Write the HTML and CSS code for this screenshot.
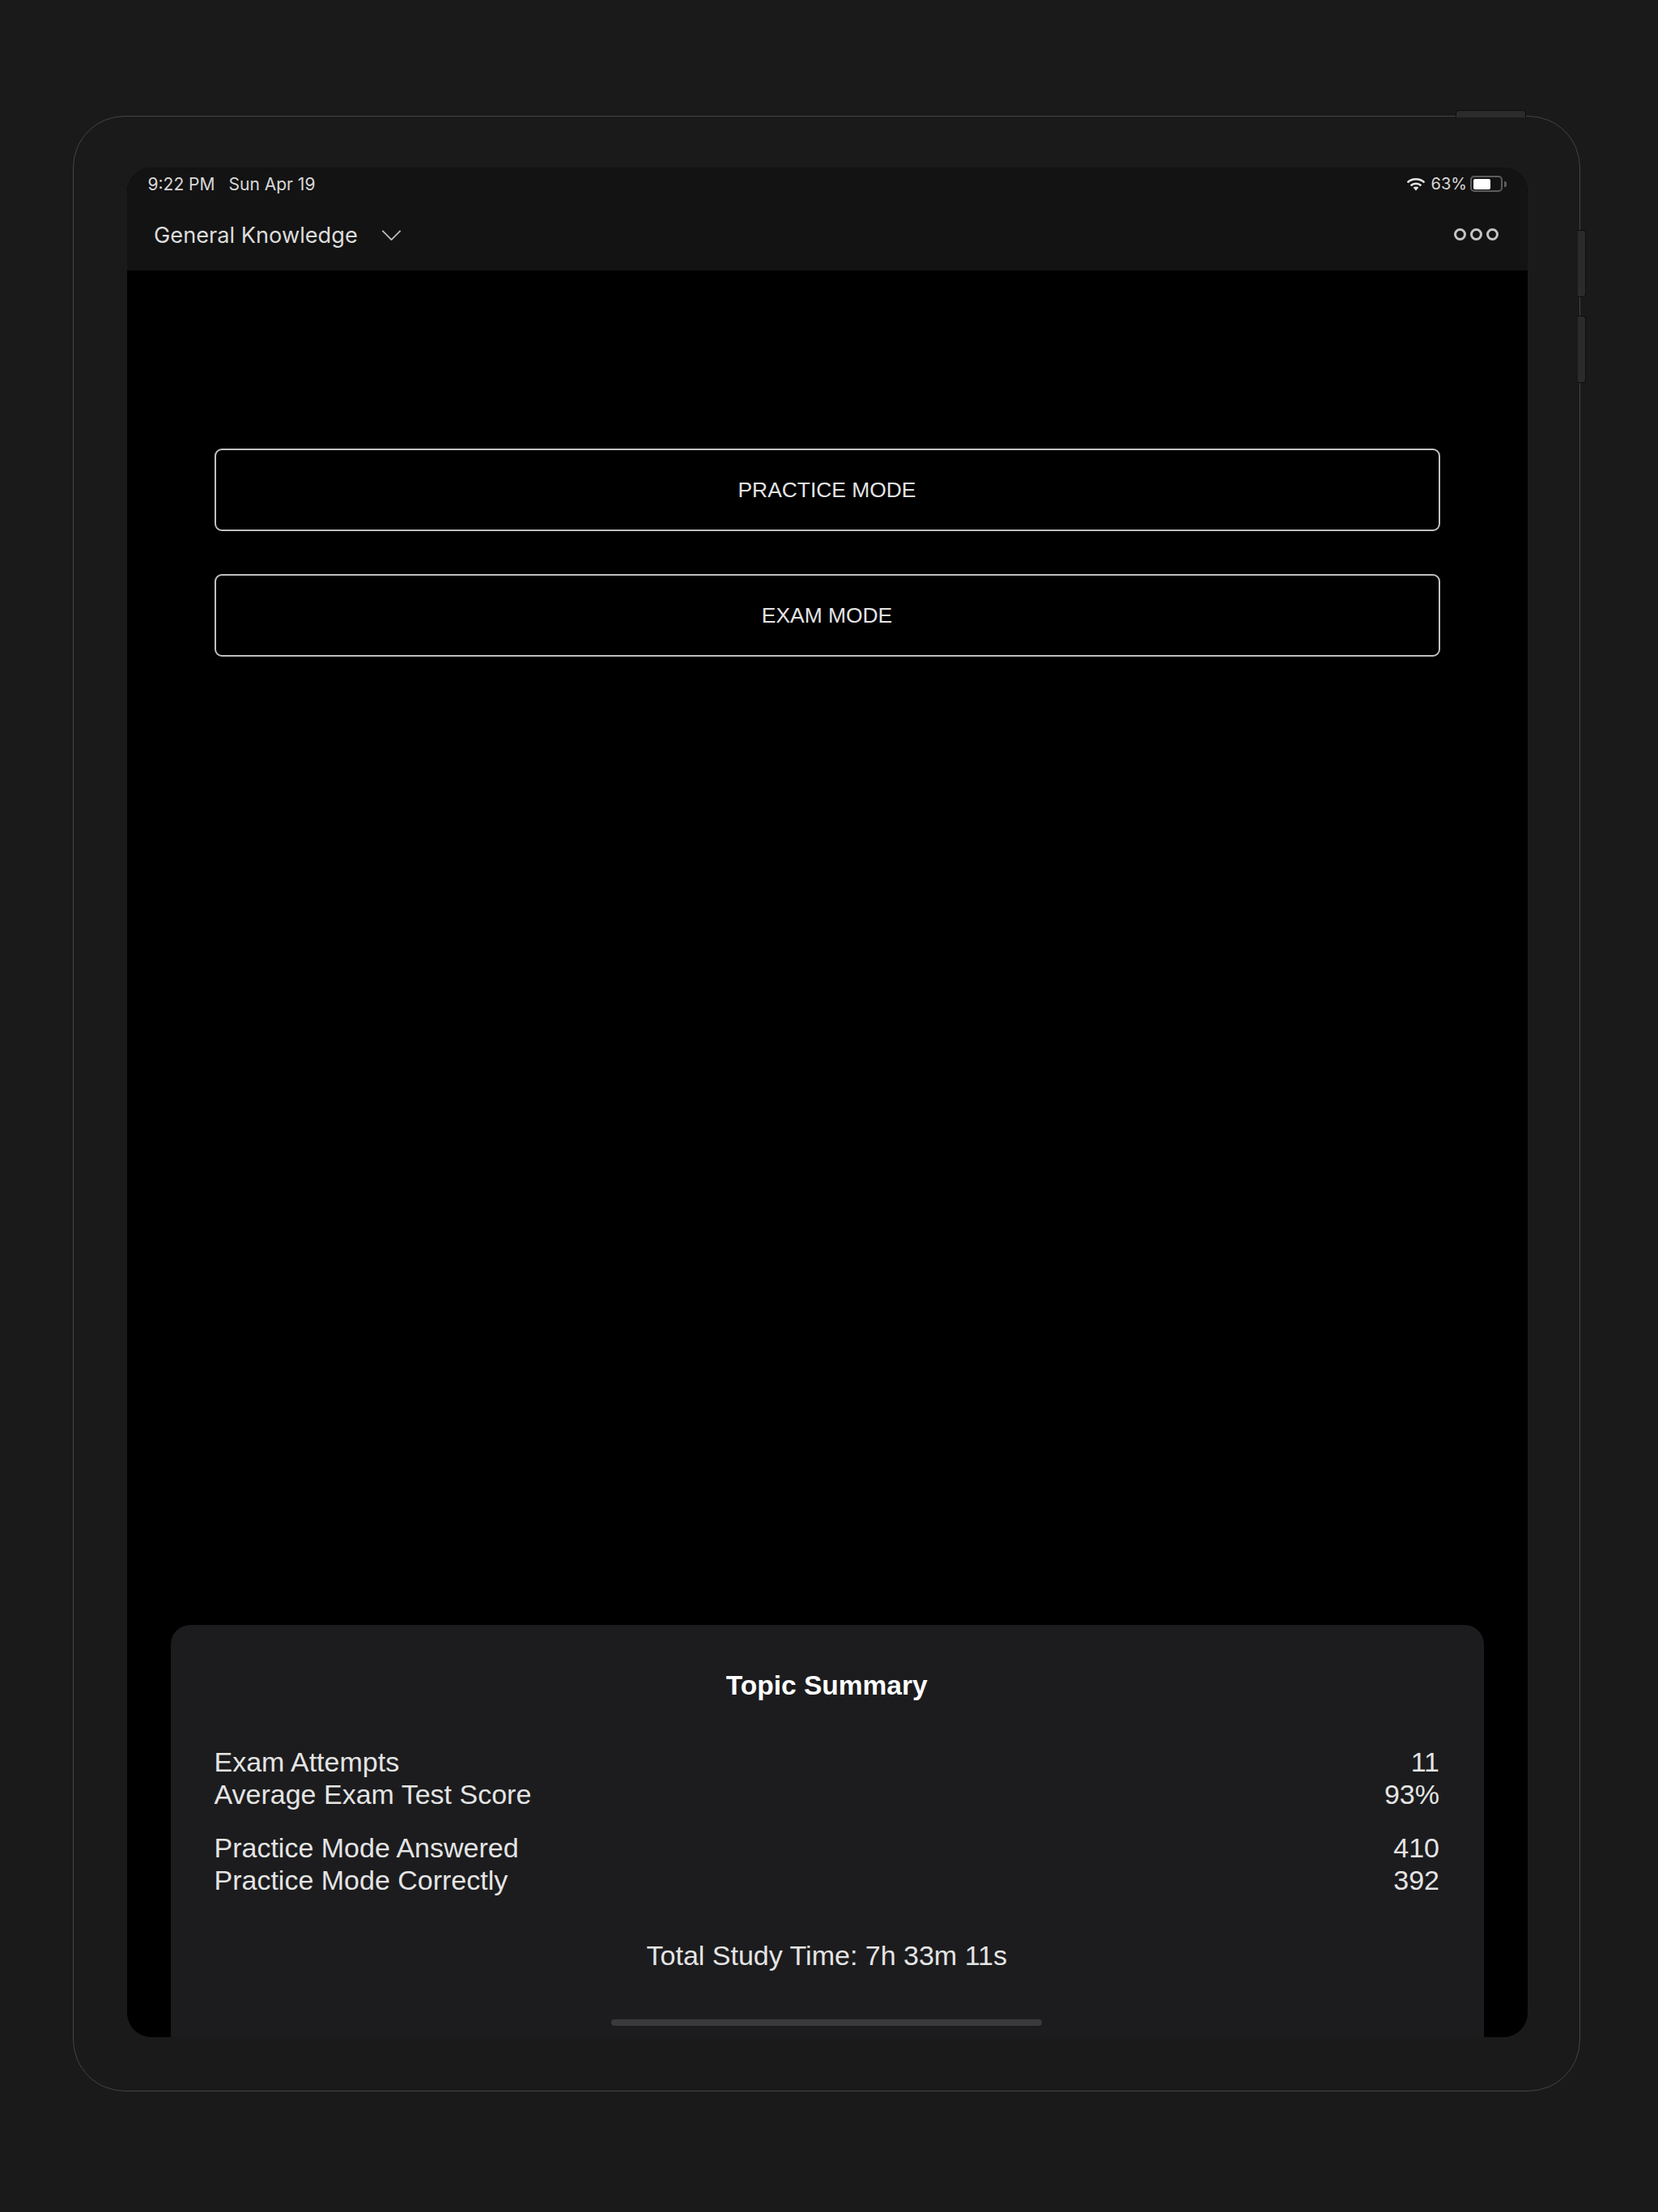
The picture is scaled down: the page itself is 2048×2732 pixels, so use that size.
FILE: index.html
```html
<!DOCTYPE html>
<html lang="en">

<head>
  <meta charset="UTF-8" />
  <title>General Knowledge</title>
  <link rel="stylesheet" href="styles.css">
</head>

<body>
  <div class="device">
    <div class="hw hw-top"></div>
    <div class="hw hw-vol-up"></div>
    <div class="hw hw-vol-down"></div>

    <div class="screen">
      <header class="topbar">
        <div class="status">
          <div class="status-left">
            <span>9:22 PM</span>
            <span>Sun Apr 19</span>
          </div>
          <div class="status-right">
            <svg class="wifi" viewBox="0 0 24 17" aria-hidden="true">
              <path d="M1.6 6.4C7.4 .9 16.6 .9 22.4 6.4" />
              <path d="M5.6 10.2C9.2 6.9 14.8 6.9 18.4 10.2" />
              <path class="wifi-dot" d="M8.6 12.6C10.6 11 13.4 11 15.4 12.6L12 16.6Z" />
            </svg>
            <span class="pct">63%</span>
            <div class="battery">
              <div class="battery-level"></div>
            </div>
            <div class="battery-nub"></div>
          </div>
        </div>
        <div class="nav">
          <div class="topic">
            <span>General Knowledge</span>
            <svg class="chevron" viewBox="0 0 26 14" aria-hidden="true">
              <path d="M1 1L13 13L25 1" />
            </svg>
          </div>
          <div class="more">
            <i></i><i></i><i></i>
          </div>
        </div>
      </header>

      <main class="content">
        <div class="modes">
          <button class="mode-btn">PRACTICE MODE</button>
          <button class="mode-btn">EXAM MODE</button>
        </div>

        <section class="summary">
          <h2>Topic Summary</h2>
          <div class="group">
            <div class="row"><span>Exam Attempts</span><span>11</span></div>
            <div class="row"><span>Average Exam Test Score</span><span>93%</span></div>
          </div>
          <div class="group">
            <div class="row"><span>Practice Mode Answered</span><span>410</span></div>
            <div class="row"><span>Practice Mode Correctly</span><span>392</span></div>
          </div>
          <p class="total">Total Study Time: 7h 33m 11s</p>
        </section>
      </main>

      <div class="home-bar"></div>
    </div>
  </div>
</body>

</html>
```

FILE: styles.css
```css
* {
  margin: 0;
  padding: 0;
  box-sizing: border-box;
}

body {
  background-color: #1a1a1a;
  font-family: "Liberation Sans", Arial, sans-serif;
  color: #e4e4e4;
  height: 2732px;
  overflow: hidden;
}

.device {
  position: relative;
  width: 1862px;
  height: 2440px;
  margin: 143px 0 0 90px;
  padding: 63px 64px 66px 65.5px;
  border: 1px solid #444;
  border-radius: 64px;
}

.hw {
  position: absolute;
  background-color: #2b2b2b;
  border: 1px solid #0e0e0e;
}

.hw-top {
  top: -8px;
  left: 1707px;
  width: 87px;
  height: 9px;
  border-bottom: 0;
  border-radius: 4px 4px 0 0;
}

.hw-vol-up,
.hw-vol-down {
  left: 1858px;
  width: 10px;
  border-left: 0;
  border-radius: 0 4px 4px 0;
}

.hw-vol-up {
  top: 140px;
  height: 83px;
}

.hw-vol-down {
  top: 246px;
  height: 83px;
}

.screen {
  position: relative;
  display: flex;
  flex-direction: column;
  height: 100%;
  background-color: #000;
  border-radius: 30px;
  overflow: hidden;
}

.topbar {
  height: 127px;
  padding: 0 26px 0 26px;
  background-color: #131313;
  font-family: Inter, "Liberation Sans", sans-serif;
}

.status {
  display: flex;
  justify-content: space-between;
  align-items: center;
  height: 40px;
  font-size: 21px;
  color: #d8d8d8;
}

.status-left {
  display: flex;
  gap: 17px;
}

.status-right {
  display: flex;
  align-items: center;
}

.wifi {
  width: 24px;
  height: 17px;
  margin-right: 7px;
}

.wifi path {
  fill: none;
  stroke: #e6e6e6;
  stroke-width: 2.6;
}

.wifi .wifi-dot {
  fill: #e6e6e6;
  stroke: none;
}

.pct {
  margin-right: 4px;
  font-size: 20px;
}

.battery {
  width: 40px;
  height: 20px;
  padding: 1.5px 2px;
  border: 2px solid #5c5c5c;
  border-radius: 5px;
}

.battery-level {
  width: 21px;
  height: 100%;
  background-color: #fff;
  border-radius: 2px;
}

.battery-nub {
  width: 3px;
  height: 7px;
  margin-left: 2px;
  background-color: #5c5c5c;
  border-radius: 0 2px 2px 0;
}

.nav {
  display: flex;
  justify-content: space-between;
  align-items: center;
  height: 87px;
  padding: 0 10px 0 7.5px;
}

.topic {
  display: flex;
  align-items: center;
  gap: 29px;
  font-size: 27.2px;
  color: #dcdcdc;
}

.chevron {
  width: 25px;
  height: 13px;
}

.chevron path {
  fill: none;
  stroke: #bdbdbd;
  stroke-width: 2;
}

.more {
  display: flex;
  gap: 5px;
  margin-bottom: 2px;
}

.more i {
  display: block;
  width: 15px;
  height: 15px;
  border: 3px solid #c4c4c4;
  border-radius: 50%;
}

.content {
  flex: 1;
  display: flex;
  flex-direction: column;
  justify-content: space-between;
}

.modes {
  display: flex;
  flex-direction: column;
  gap: 53px;
  padding: 220px 108.5px 0 108px;
}

.mode-btn {
  height: 102px;
  background-color: #000;
  border: 2px solid #c0c0c0;
  border-radius: 9px;
  color: #e4e4e4;
  font-family: inherit;
  font-size: 26.4px;
}

.summary {
  height: 509px;
  margin: 0 54px;
  padding: 0 55px 0 54px;
  background-color: #1c1c1e;
  border-radius: 24px 24px 0 0;
  font-size: 34px;
  line-height: 40px;
}

.summary h2 {
  padding: 55px 0 54px;
  font-size: 33.5px;
  line-height: 40px;
  font-weight: 700;
  text-align: center;
  color: #fff;
}

.group {
  margin-bottom: 26px;
}

.row {
  display: flex;
  justify-content: space-between;
}

.total {
  padding-top: 27px;
  text-align: center;
}

.home-bar {
  position: absolute;
  left: 598.5px;
  bottom: 14px;
  width: 532px;
  height: 8px;
  background-color: #3a3a3c;
  border-radius: 4px;
}
```
